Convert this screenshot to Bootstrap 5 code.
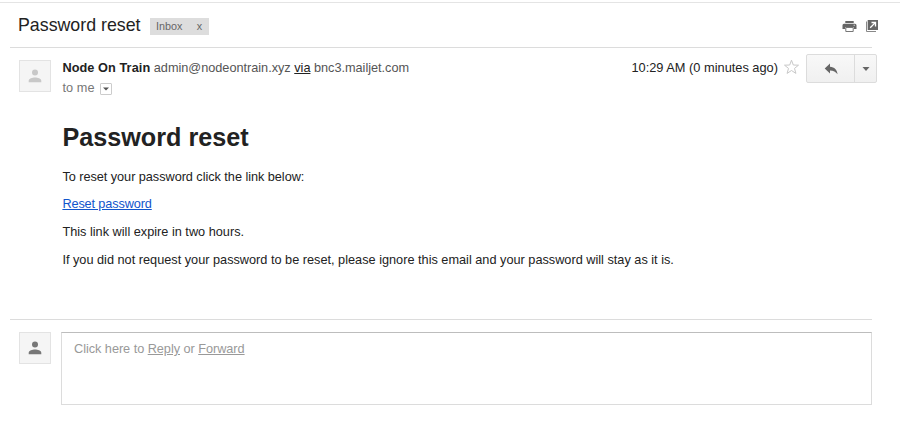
<!DOCTYPE html>
<html lang="en">
<head>
<meta charset="utf-8">
<meta name="viewport" content="width=device-width, initial-scale=1">
<title>Password reset</title>
<link href="https://cdn.jsdelivr.net/npm/bootstrap@5.3.0/dist/css/bootstrap.min.css" rel="stylesheet">
<style>
body{font-family:"Liberation Sans",Arial,sans-serif;font-size:12.72px;line-height:20px;color:#222;background:#fff;height:427px;overflow:hidden}
.top-rule{height:1px;margin-top:2px;background:#e4e4e4}
.mail{width:862px;margin-left:10px}
.subject-bar{height:45px;border-bottom:1px solid #dcdcdc;padding-left:8px}
.subject{font-size:17.8px;line-height:24px;margin:10px 9px 0 0;font-weight:400}
.tag{width:59px;height:17px;margin-top:15px;background:#ddd;color:#666;font-size:10.8px;line-height:17px;padding:0 6.500px 0 6.500px}
.tools{margin:16px -7px 0 auto;gap:8px}
.avatar{width:32px;height:32px;background:#f5f5f5;border:1px solid #e3e3e3;margin:0 10px 0 9px;flex:none}
.sender{padding-top:12px}
.sender-text{line-height:20px;margin:-2px 0 0 1.4px}
.sender-name{letter-spacing:.07px}
.muted{color:#555;letter-spacing:-.02px}
.to-line{color:#777;letter-spacing:.1px}
.via{color:#222}
.drop{width:12px;height:12px;border:1px solid #ccc;border-radius:1px;margin:1px 0 0 5px}
.when{margin-top:-2px;font-size:12.8px}
.star{margin:0 6px 0 5px}
.actions{height:29px;margin:-6px -5px 0 0;border:1px solid #dcdcdc;border-radius:2px;background:linear-gradient(#f8f8f8,#f0f0f0)}
.act-reply{width:48px;border-right:1px solid #dcdcdc}
.act-more{width:21px}
.message{padding-left:52.4px;height:222px;border-bottom:1px solid #dcdcdc}
.message h1{font-size:25.2px;line-height:30px;font-weight:700;margin:0 0 14.5px;padding-top:24px}
.message p{line-height:20px;margin:0 0 7.7px}
.message .intro{letter-spacing:-.045px}
.message a{color:#15c;letter-spacing:-.13px}
.reply-box{height:73px;border:1px solid #dcdcdc;border-top-color:#bdbdbd;color:#999;padding:6px 12px;letter-spacing:-.04px}
.reply-box a{color:#999}
svg{display:block}
</style>
</head>
<body>
<div class="top-rule"></div>
<main class="mail">
  <header class="subject-bar d-flex align-items-start">
    <h2 class="subject text-nowrap">Password reset</h2>
    <div class="tag d-flex justify-content-between"><span>Inbox</span><span>x</span></div>
    <div class="tools d-flex">
      <svg width="15" height="14" viewBox="0 0 15 14"><path fill="#666" d="M3.3 2h8.400v2H3.300zM2 4.700h11a1.500 1.500 0 0 1 1.500 1.500V10h-2.800V8H3.300v2H.5V6.200A1.500 1.500 0 0 1 2 4.700z"/><path fill="none" stroke="#777" d="M3.800 8.500h7.400v4H3.800z"/><path fill="#fff" d="M11.700 5.700h1v1h-1z"/></svg>
      <svg width="14" height="14" viewBox="0 0 14 14"><path fill="none" stroke="#888" d="M1.500 2.500v10H11"/><path fill="#666" d="M2.700 1h10.300v10H2.700z"/><path stroke="#fff" stroke-width="1.300" fill="none" d="M5.200 8.700 10.300 3.600M6.500 3.500h4v4"/></svg>
    </div>
  </header>
  <section class="sender d-flex align-items-start">
    <div class="avatar d-flex justify-content-center align-items-center"><svg width="14" height="14" viewBox="0 0 14 14" fill="#c8c8c8"><circle cx="7" cy="3.500" r="3"/><path d="M.7 13.200v-1.500C.7 9.500 4.500 8.500 7 8.500s6.300 1 6.300 3.200v1.500z"/></svg></div>
    <div class="sender-text text-nowrap">
      <div><b class="sender-name">Node On Train</b> <span class="muted">admin@nodeontrain.xyz <u class="via">via</u> bnc3.mailjet.com</span></div>
      <div class="to-line d-flex align-items-center">to me <span class="drop d-flex justify-content-center align-items-center"><svg width="6" height="4" viewBox="0 0 6 4"><path fill="#555" d="M0 .5h6L3 3.500z"/></svg></span></div>
    </div>
    <div class="when d-flex text-nowrap ms-auto">10:29 AM (0 minutes ago)
      <svg class="star" width="17" height="17" viewBox="0 0 17 17"><path fill="#fff" stroke="#c8c8c8" d="m8.500 2.200 1.800 4.800 5.200.2-4 3.200 1.400 5-4.400-2.900-4.400 2.900 1.400-5-4-3.200 5.200-.2z"/></svg>
    </div>
    <div class="actions d-flex">
      <div class="act-reply d-flex justify-content-center align-items-center"><svg width="14" height="12" viewBox="0 0 14 12"><path fill="#666" d="M6 .5v3.200c4.500.3 7 3 7.600 7.600C11.700 8.600 9.500 7.400 6 7.400v3.200L.7 5.500z"/></svg></div>
      <div class="act-more d-flex justify-content-center align-items-center"><svg width="8" height="4" viewBox="0 0 8 4"><path fill="#666" d="M.5 0h7L4 4z"/></svg></div>
    </div>
  </section>
  <article class="message">
    <h1>Password reset</h1>
    <p class="intro">To reset your password click the link below:</p>
    <p><a href="#">Reset password</a></p>
    <p>This link will expire in two hours.</p>
    <p>If you did not request your password to be reset, please ignore this email and your password will stay as it is.</p>
  </article>
  <section class="d-flex pt-2 mt-1">
    <div class="avatar d-flex justify-content-center align-items-center"><svg width="14" height="14" viewBox="0 0 14 14" fill="#777"><circle cx="7" cy="3.500" r="3"/><path d="M.7 13.200v-1.500C.7 9.500 4.500 8.500 7 8.500s6.300 1 6.300 3.200v1.500z"/></svg></div>
    <div class="reply-box flex-grow-1">Click here to <a href="#">Reply</a> or <a href="#">Forward</a></div>
  </section>
</main>
<script src="https://cdn.jsdelivr.net/npm/bootstrap@5.3.0/dist/js/bootstrap.bundle.min.js"></script>
</body>
</html>
